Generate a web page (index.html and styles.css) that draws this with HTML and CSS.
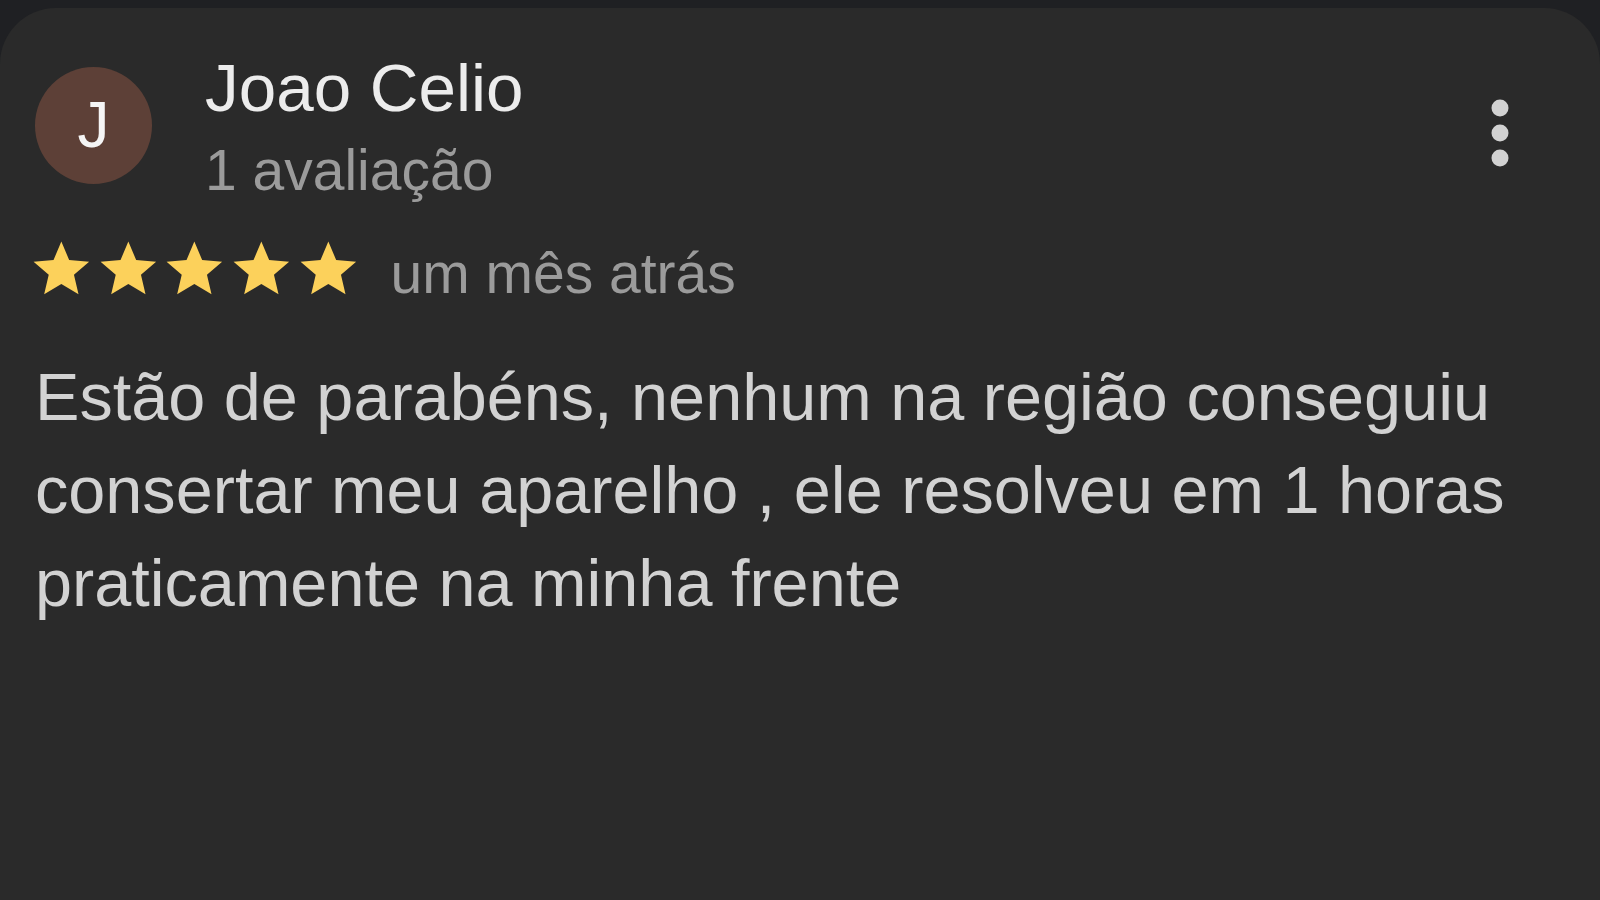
FILE: index.html
```html
<!DOCTYPE html>
<html lang="pt-BR">
<head>
<meta charset="utf-8">
<title>Avaliação</title>
<link rel="stylesheet" href="styles.css">
</head>
<body>
<div class="page">
  <section class="card">
    <header class="head">
      <div class="avatar">J</div>
      <div class="who">
        <div class="name">Joao Celio</div>
        <div class="count">1 avaliação</div>
      </div>
      <svg class="kebab" viewBox="0 0 40 70" width="40" height="70" aria-hidden="true">
        <circle cx="20" cy="10" r="8.5"/>
        <circle cx="20" cy="35" r="8.5"/>
        <circle cx="20" cy="60" r="8.5"/>
      </svg>
    </header>
    <div class="rating">
      <div class="stars">
        <svg class="star" viewBox="0 0 24 24"><path d="M12 17.27L18.18 21l-1.64-7.030L22 9.24l-7.19-.61L12 2 9.19 8.63 2 9.24l5.46 4.73L5.82 21z"/></svg>
        <svg class="star" viewBox="0 0 24 24"><path d="M12 17.27L18.18 21l-1.64-7.03L22 9.24l-7.19-.61L12 2 9.19 8.63 2 9.24l5.46 4.73L5.82 21z"/></svg>
        <svg class="star" viewBox="0 0 24 24"><path d="M12 17.27L18.18 21l-1.64-7.03L22 9.24l-7.19-.61L12 2 9.19 8.63 2 9.24l5.46 4.73L5.82 21z"/></svg>
        <svg class="star" viewBox="0 0 24 24"><path d="M12 17.27L18.18 21l-1.64-7.03L22 9.24l-7.19-.61L12 2 9.19 8.63 2 9.24l5.46 4.73L5.82 21z"/></svg>
        <svg class="star" viewBox="0 0 24 24"><path d="M12 17.27L18.18 21l-1.64-7.03L22 9.24l-7.19-.61L12 2 9.19 8.63 2 9.24l5.46 4.73L5.82 21z"/></svg>
      </div>
      <span class="when">um mês atrás</span>
    </div>
    <p class="text">Estão de parabéns, nenhum na região conseguiu consertar meu aparelho , ele resolveu em 1 horas praticamente na minha frente</p>
  </section>
</div>
</body>
</html>
```
FILE: styles.css
```css
html, body {
  margin: 0;
  padding: 0;
  background: #1f2023;
}
body {
  font-family: "Liberation Sans", Arial, sans-serif;
  width: 1600px;
  height: 900px;
  overflow: hidden;
}
.page {
  padding-top: 8px;
}
.card {
  background: #2a2a2a;
  border-radius: 56px 56px 0 0;
  height: 892px;
  box-sizing: border-box;
  padding: 38px 80px 0 33px;
}
.head {
  display: flex;
  align-items: flex-start;
}
.avatar {
  flex: none;
  width: 117px;
  height: 117px;
  margin: 21px 0 0 2px;
  border-radius: 50%;
  background: #5d4037;
  color: #f5f5f5;
  font-size: 64px;
  line-height: 117px;
  text-align: center;
}
.who {
  margin-left: 53px;
}
.name {
  font-size: 67.4px;
  line-height: 84px;
  color: #ececec;
}
.count {
  font-size: 57px;
  line-height: 81px;
  color: #9b9b9b;
}
.kebab {
  flex: none;
  margin: 52px 0 0 auto;
  fill: #d2d2d2;
}
.rating {
  display: flex;
  align-items: flex-start;
  margin-top: 25px;
}
.stars {
  display: flex;
  margin-left: -5px;
}
.star {
  width: 66.7px;
  height: 66.7px;
  fill: #fcd15b;
}
.when {
  margin-left: 29px;
  font-size: 57px;
  line-height: 75px;
  color: #9b9b9b;
}
.text {
  margin: 40px 0 0;
  padding-left: 2px;
  font-size: 66.6px;
  line-height: 93px;
  color: #d2d2d2;
}
```
